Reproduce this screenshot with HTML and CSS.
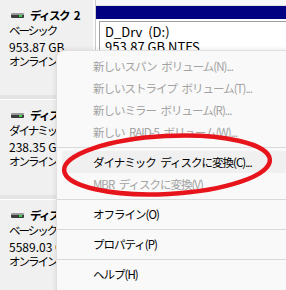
FILE: index.html
```html
<!DOCTYPE html>
<html lang="ja">
<head>
<meta charset="utf-8">
<link rel="stylesheet" href="styles.css">
</head>
<body>
<div class="screen">
  <div class="disks">
    <div class="disk">
      <div class="name"><span class="drive"><i></i></span>ディスク 2</div>
      <div class="jp">ベーシック</div>
      <div>953.87 GB</div>
      <div class="jp">オンライン</div>
    </div>
    <div class="disk">
      <div class="name"><span class="drive"><i></i></span>ディスク 3</div>
      <div class="jp">ダイナミック</div>
      <div>238.35 GB</div>
      <div class="jp">オンライン</div>
    </div>
    <div class="disk">
      <div class="name"><span class="drive"><i></i></span>ディスク 4</div>
      <div class="jp">ベーシック</div>
      <div>5589.03 GB</div>
      <div class="jp">オンライン</div>
    </div>
  </div>
  <div class="parts">
    <div class="strip"></div>
    <div class="bar"></div>
    <div class="volume">
      <div class="vname">D_Drv&nbsp; (D:)</div>
      <div>953.87 GB NTFS</div>
    </div>
  </div>

  <div class="menu">
    <div class="item off">新しいスパン ボリューム(N)...</div>
    <div class="item off">新しいストライプ ボリューム(T)...</div>
    <div class="item off">新しいミラー ボリューム(R)...</div>
    <div class="item off">新しい RAID-5 ボリューム(W)...</div>
    <div class="sep"></div>
    <div class="item hover">ダイナミック ディスクに変換(C)...</div>
    <div class="item off">MBR ディスクに変換(V)</div>
    <div class="sep"></div>
    <div class="item">オフライン(O)</div>
    <div class="sep"></div>
    <div class="item">プロパティ(P)</div>
    <div class="sep"></div>
    <div class="item">ヘルプ(H)</div>
  </div>

  <svg class="mark" width="286" height="290" viewBox="0 0 286 290">
    <ellipse cx="167" cy="165" rx="103" ry="29" transform="rotate(-3 167 165)" fill="none" stroke="#e8141c" stroke-width="4.5"/>
  </svg>
</div>
</body>
</html>
```
FILE: styles.css
```css
* { box-sizing: border-box; }
html, body { margin: 0; padding: 0; }
body {
  width: 286px;
  height: 290px;
  overflow: hidden;
  background: #f0f0f0;
  font-family: "Noto Sans CJK JP", "Noto Sans", sans-serif;
  font-size: 12px;
  color: #000;
}
.screen {
  position: relative;
  width: 286px;
  height: 290px;
  display: flex;
  overflow: hidden;
}
.disks {
  width: 95px;
  flex: none;
  display: flex;
  flex-direction: column;
  border-right: 2px solid #fafafa;
}
.disk {
  height: 100px;
  flex: none;
  padding: 8px 0 0 9px;
  line-height: 15.3px;
  white-space: nowrap;
  overflow: hidden;
  border-bottom: 1px solid #fff;
  box-shadow: inset 0 -4px 0 #e4e4e4;
}
.disk .jp {
  font-size: 11.5px;
  letter-spacing: -2px;
}
.disk .name {
  display: flex;
  align-items: center;
  font-weight: bold;
  font-size: 11.5px;
  letter-spacing: -1.6px;
  word-spacing: 4px;
}
.drive {
  width: 13px;
  height: 5px;
  margin: 0 6px 0 2px;
  background: linear-gradient(#9a9a9a 0 40%, #3c3c3c 40% 100%);
  border-radius: 1px;
  position: relative;
}
.drive i {
  position: absolute;
  right: 2px;
  top: 2px;
  width: 3px;
  height: 2px;
  background: #3ed04a;
}
.parts {
  flex: 1;
  background: #fff;
  display: flex;
  flex-direction: column;
  border-left: 1px solid #c8c8c8;
}
.strip {
  height: 6px;
  background: #f8f8f8;
  border-bottom: 1px solid #e2e2e2;
}
.bar {
  height: 13px;
  background: #000080;
}
.volume {
  margin: 2px 0 0 3px;
  border-top: 1px solid #a0a0a0;
  border-left: 1px solid #a0a0a0;
  padding: 2px 0 0 5px;
  line-height: 15px;
  font-size: 13px;
  flex: 1;
}
.menu {
  position: absolute;
  left: 56px;
  top: 50px;
  width: 260px;
  height: 260px;
  background: #f9f9f9;
  border: 1px solid #e0e0e0;
  border-radius: 8px 0 0 0;
  box-shadow: -1px -1px 4px rgba(0,0,0,0.08);
  padding: 4px 0 0 0;
}
.item {
  height: 22px;
  line-height: 22px;
  padding-left: 31px;
  margin: 0 0 0 5px;
  border-radius: 4px;
  white-space: nowrap;
  font-size: 11.5px;
  letter-spacing: -1px;
  word-spacing: 3px;
}
.item.off { color: #a3a3a3; }
.item.hover { background: #f0f0f0; }
.sep {
  height: 8px;
  position: relative;
}
.sep::after {
  content: "";
  position: absolute;
  left: 0;
  right: 0;
  top: 4px;
  height: 1px;
  background: #d9d9d9;
}
.mark {
  position: absolute;
  left: 0;
  top: 0;
  pointer-events: none;
}
```
